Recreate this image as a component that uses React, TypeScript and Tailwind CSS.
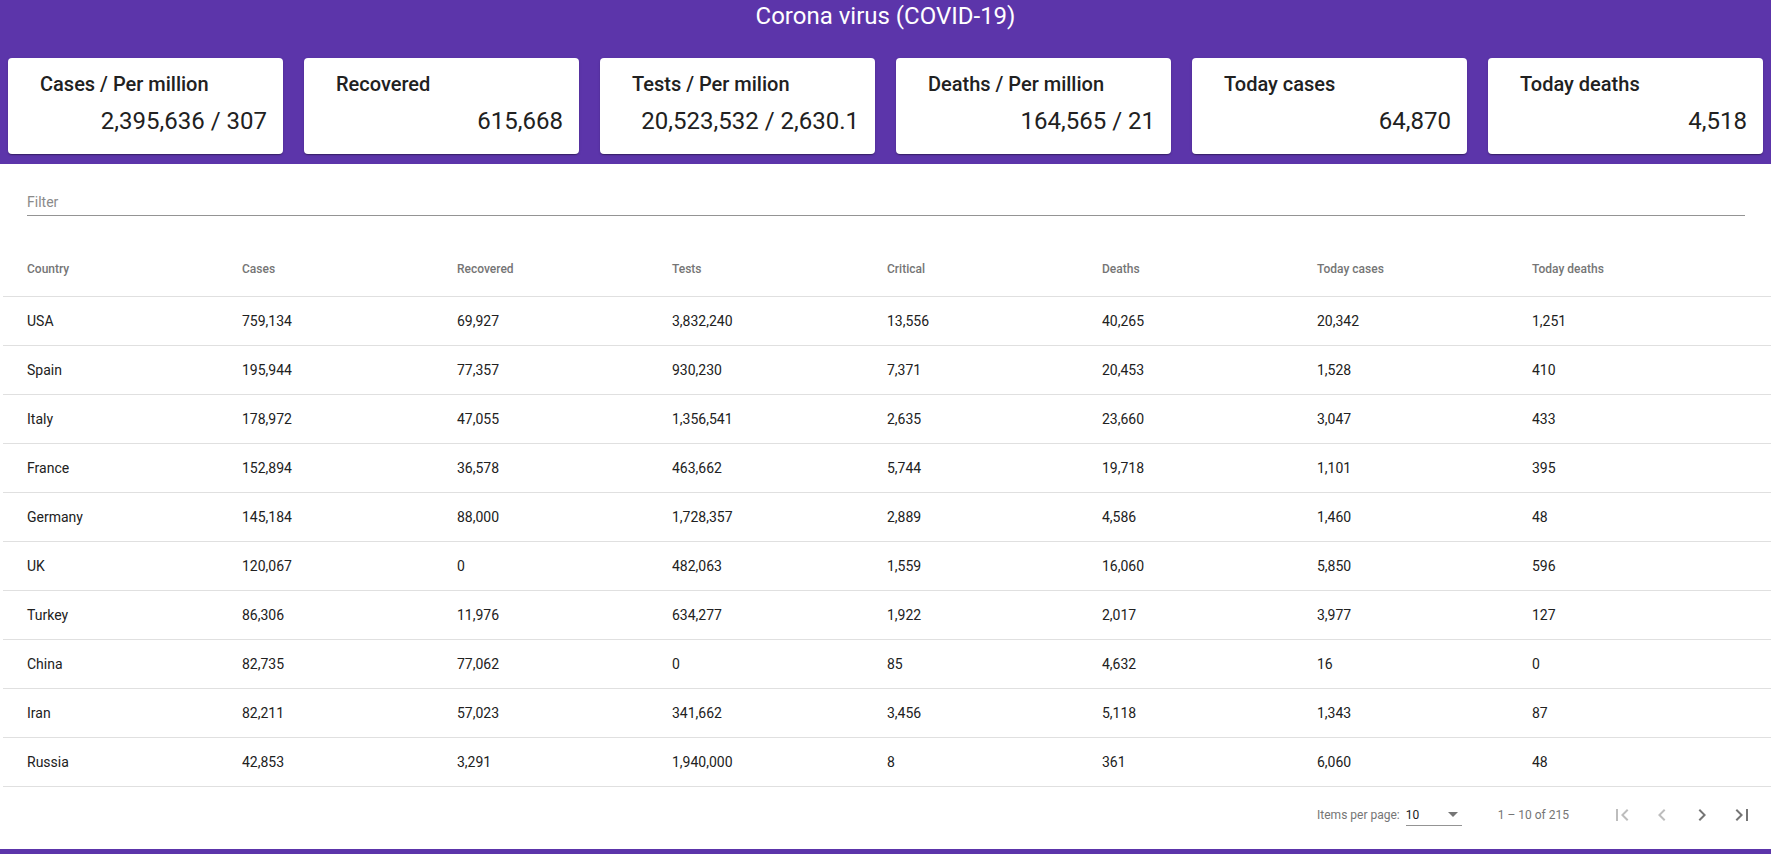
import React, { FC, useState } from "react";

/* DATA */
interface StatCard {
  title: string;
  value: string;
}
interface CountryRow {
  country: string;
  cases: string;
  recovered: string;
  tests: string;
  critical: string;
  deaths: string;
  todayCases: string;
  todayDeaths: string;
}

const Cards: StatCard[] = [
  { title: "Cases / Per million", value: "2,395,636 / 307" },
  { title: "Recovered", value: "615,668" },
  { title: "Tests / Per milion", value: "20,523,532 / 2,630.1" },
  { title: "Deaths / Per million", value: "164,565 / 21" },
  { title: "Today cases", value: "64,870" },
  { title: "Today deaths", value: "4,518" },
];

const Columns = [
  "Country",
  "Cases",
  "Recovered",
  "Tests",
  "Critical",
  "Deaths",
  "Today cases",
  "Today deaths",
];

const raw: string[][] = [
  ["USA", "759,134", "69,927", "3,832,240", "13,556", "40,265", "20,342", "1,251"],
  ["Spain", "195,944", "77,357", "930,230", "7,371", "20,453", "1,528", "410"],
  ["Italy", "178,972", "47,055", "1,356,541", "2,635", "23,660", "3,047", "433"],
  ["France", "152,894", "36,578", "463,662", "5,744", "19,718", "1,101", "395"],
  ["Germany", "145,184", "88,000", "1,728,357", "2,889", "4,586", "1,460", "48"],
  ["UK", "120,067", "0", "482,063", "1,559", "16,060", "5,850", "596"],
  ["Turkey", "86,306", "11,976", "634,277", "1,922", "2,017", "3,977", "127"],
  ["China", "82,735", "77,062", "0", "85", "4,632", "16", "0"],
  ["Iran", "82,211", "57,023", "341,662", "3,456", "5,118", "1,343", "87"],
  ["Russia", "42,853", "3,291", "1,940,000", "8", "361", "6,060", "48"],
];

const Rows: CountryRow[] = raw.map((r) => ({
  country: r[0],
  cases: r[1],
  recovered: r[2],
  tests: r[3],
  critical: r[4],
  deaths: r[5],
  todayCases: r[6],
  todayDeaths: r[7],
}));

/* ICONS (material paths) */
const PagerIcon: FC<{ d: string; disabled?: boolean }> = ({ d, disabled }) => (
  <button className="w-[40px] h-[40px] flex items-center justify-center rounded-full">
    <svg
      viewBox="0 0 24 24"
      width={24}
      height={24}
      className={disabled ? "fill-[#bdbdbd]" : "fill-[#757575]"}
    >
      <path d={d} />
    </svg>
  </button>
);

/* COMPONENTS */
const StatsCard: FC<StatCard> = ({ title, value }) => (
  <div className="h-[96px] bg-white rounded-[4px] shadow-[0_2px_1px_-1px_rgba(0,0,0,0.2),0_1px_1px_0_rgba(0,0,0,0.14),0_1px_3px_0_rgba(0,0,0,0.12)] pt-[14px] pl-[32px] pr-[16px]">
    <div className="text-[20px] leading-[24px] font-medium text-[#212121]">
      {title}
    </div>
    <div className="mt-[9px] text-[24px] leading-[32px] text-right text-[#212121] whitespace-nowrap">
      {value}
    </div>
  </div>
);

export default function App() {
  const [filter, setFilter] = useState("");

  const shown = Rows.filter((r) =>
    r.country.toLowerCase().includes(filter.trim().toLowerCase())
  );

  return (
    <div className="min-h-screen bg-white font-['Roboto',sans-serif]">
      {/* header */}
      <div className="bg-[#5c35aa] pb-[10px]">
        <h1 className="text-white text-[24px] leading-[32px] text-center mb-[26px]">
          Corona virus (COVID-19)
        </h1>
        <div className="grid grid-cols-6 gap-[21px] px-[8px]">
          {Cards.map((c) => (
            <StatsCard key={c.title} {...c} />
          ))}
        </div>
      </div>

      {/* filter */}
      <div className="pl-[27px] pr-[26px] pt-[30px] mb-[25px]">
        <div className="pb-[5px] border-b border-[#949494]">
          <input
            value={filter}
            onChange={(e) => setFilter(e.target.value)}
            placeholder="Filter"
            className="block w-full h-[16px] text-[14px] leading-[16px] outline-none text-[#212121] placeholder:text-[#8a8a8a] bg-transparent"
          />
        </div>
      </div>

      {/* table */}
      <div className="ml-[3px]">
        <div className="grid grid-cols-8 px-[24px] h-[56px] items-center border-b border-[#e0e0e0] text-[12px] font-medium text-[#757575]">
          {Columns.map((c) => (
            <div key={c}>{c}</div>
          ))}
        </div>
        {shown.map((r) => (
          <div
            key={r.country}
            className="grid grid-cols-8 px-[24px] h-[49px] items-center border-b border-[#e0e0e0] text-[14px] text-[#212121]"
          >
            <div>{r.country}</div>
            <div>{r.cases}</div>
            <div>{r.recovered}</div>
            <div>{r.tests}</div>
            <div>{r.critical}</div>
            <div>{r.deaths}</div>
            <div>{r.todayCases}</div>
            <div>{r.todayDeaths}</div>
          </div>
        ))}

        {/* paginator */}
        <div className="h-[56px] flex items-center justify-end pr-[9px] text-[12px] text-[#757575]">
          <span className="mr-[6px]">Items per page:</span>
          <div className="w-[56px] h-[22px] border-b border-[#949494] flex items-center justify-between pr-[4px]">
            <span className="text-[#212121]">10</span>
            <span className="w-0 h-0 border-l-[5px] border-r-[5px] border-t-[5px] border-l-transparent border-r-transparent border-t-[#757575]" />
          </div>
          <span className="ml-[36px] mr-[33px]">1 – 10 of 215</span>
          <PagerIcon disabled d="M18.41 16.59L13.82 12l4.59-4.59L17 6l-6 6 6 6zM6 6h2v12H6z" />
          <PagerIcon disabled d="M15.41 7.41L14 6l-6 6 6 6 1.41-1.41L10.83 12z" />
          <PagerIcon d="M10 6L8.59 7.41 13.17 12l-4.58 4.59L10 18l6-6z" />
          <PagerIcon d="M5.59 7.41L10.18 12l-4.59 4.59L7 18l6-6-6-6zM16 6h2v12h-2z" />
        </div>
      </div>

      {/* footer */}
      <div className="mt-[6px] h-[40px] bg-[#5c35aa]" />
    </div>
  );
}
